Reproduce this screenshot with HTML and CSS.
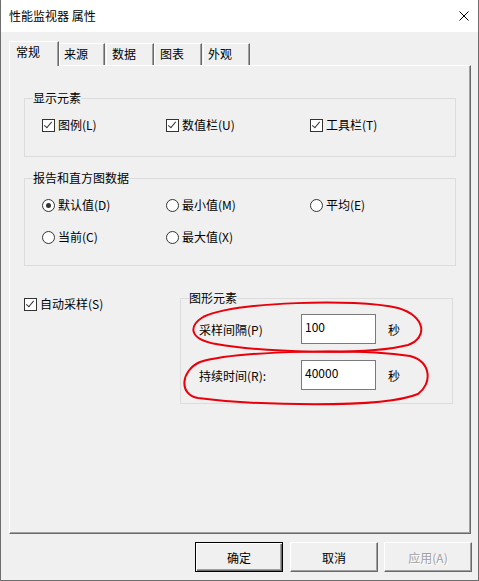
FILE: index.html
```html
<!DOCTYPE html>
<html>
<head>
    <meta charset="UTF-8">
    <title>性能监视器 属性</title>
    <link rel="stylesheet" href="styles.css">
</head>
<body>
<div class="window">
    <!-- Title bar -->
    <div class="titlebar">
        <span class="title">性能监视器 属性</span>
        <svg class="close" width="10" height="10" viewBox="0 0 10 10">
            <path d="M0.5 0.5 L9.5 9.5 M9.5 0.5 L0.5 9.5" stroke="#000" stroke-width="1" fill="none"/>
        </svg>
    </div>

    <div class="content">
        <!-- Tabs -->
        <div class="tabs">
            <div class="tab active">常规</div>
            <div class="tab tab-src">来源</div>
            <div class="tab tab-data">数据</div>
            <div class="tab tab-chart">图表</div>
            <div class="tab tab-look">外观</div>
        </div>

        <div class="panel">
            <!-- 显示元素 -->
            <div class="group group-show">
                <span class="group-title">显示元素</span>
                <div class="grid">
                    <label class="opt"><span class="box checked"></span>图例(L)</label>
                    <label class="opt"><span class="box checked"></span>数值栏(U)</label>
                    <label class="opt"><span class="box checked"></span>工具栏(T)</label>
                </div>
            </div>

            <!-- 报告和直方图数据 -->
            <div class="group group-report">
                <span class="group-title">报告和直方图数据</span>
                <div class="grid">
                    <label class="opt"><span class="radio on"></span>默认值(D)</label>
                    <label class="opt"><span class="radio"></span>最小值(M)</label>
                    <label class="opt"><span class="radio"></span>平均(E)</label>
                    <label class="opt"><span class="radio"></span>当前(C)</label>
                    <label class="opt"><span class="radio"></span>最大值(X)</label>
                </div>
            </div>

            <div class="bottom-row">
                <label class="opt auto"><span class="box checked"></span>自动采样(S)</label>

                <!-- 图形元素 -->
                <div class="group group-graph">
                    <span class="group-title">图形元素</span>
                    <div class="field">
                        <span class="field-label">采样间隔(P)</span>
                        <div class="input">100</div>
                        <span class="unit">秒</span>
                    </div>
                    <div class="field">
                        <span class="field-label">持续时间(R):</span>
                        <div class="input">40000</div>
                        <span class="unit">秒</span>
                    </div>
                </div>
            </div>
        </div>

        <!-- Dialog buttons -->
        <div class="buttons">
            <button class="btn default">确定</button>
            <button class="btn">取消</button>
            <button class="btn" disabled>应用(A)</button>
        </div>
    </div>

    <!-- Hand-drawn red marks -->
    <svg class="marks" width="479" height="581" viewBox="0 0 479 581">
        <path d="M203 317 C 235 302 355 298 398 308 C 426 316 428 338 408 345 C 365 356 262 352 216 344 C 188 339 189 326 203 317"
              stroke="#e8000b" stroke-width="2" fill="none"/>
        <path d="M200 362 C 240 350 362 349 410 356 C 432 362 432 384 418 394 C 382 409 252 405 198 398 C 179 395 180 371 200 362"
              stroke="#e8000b" stroke-width="2" fill="none"/>
    </svg>
</div>
</body>
</html>
```

FILE: styles.css
```css
body {
    margin: 0;
    font-family: "Noto Sans CJK SC", "Noto Sans", sans-serif;
    font-size: 12px;
    color: #000;
    background-color: #f0f0f0;
}
.window {
    position: relative;
    width: 479px;
    height: 581px;
    box-sizing: border-box;
    border: 1px solid #6e6e6e;
    border-top: none;
    background-color: #f0f0f0;
}
.titlebar {
    height: 31px;
    background-color: #fff;
    display: flex;
    align-items: center;
    justify-content: space-between;
    padding: 0 9px 1px 8px;
}
.title {
    line-height: 16px;
}
.close {
    margin-right: 0;
}
.content {
    padding: 0 8px;
}

/* tabs */
.tabs {
    display: flex;
    align-items: flex-end;
    height: 24px;
    margin-top: 9px;
}
.tab {
    box-sizing: border-box;
    height: 22px;
    line-height: 20px;
    padding-left: 4px;
    border-top: 1px solid #fff;
    border-left: 1px solid #fff;
    border-right: 1px solid #696969;
    box-shadow: inset -1px 0 #a0a0a0;
    background-color: #f0f0f0;
}
.tab.active {
    width: 50px;
    height: 25px;
    padding-left: 6px;
    margin-bottom: -1px;
    position: relative;
    z-index: 1;
}
.tab-src { width: 46px; margin-right: 1px; }
.tab-data { width: 48px; padding-left: 5px; }
.tab-chart { width: 48px; padding-left: 5px; margin-right: 1px; }
.tab-look { width: 47px; }

/* panel */
.panel {
    box-sizing: border-box;
    width: 462px;
    height: 469px;
    border-top: 1px solid #fff;
    border-left: 1px solid #fff;
    border-right: 1px solid #696969;
    border-bottom: 1px solid #696969;
    box-shadow: inset -1px -1px #a0a0a0;
    padding: 32px 0 0 14px;
}
.group {
    position: relative;
    box-sizing: border-box;
    border: 1px solid #dcdcdc;
}
.group-title {
    position: absolute;
    top: -9px;
    left: 8px;
    line-height: 16px;
    background-color: #f0f0f0;
}
.group-show {
    width: 432px;
    height: 59px;
    padding: 18px 0 0 17px;
}
.group-report {
    width: 432px;
    height: 88px;
    margin-top: 21px;
    padding: 18px 0 0 17px;
}
.grid {
    display: grid;
    grid-template-columns: 124px 144px auto;
    row-gap: 16px;
}
.opt {
    display: flex;
    align-items: center;
    height: 16px;
    line-height: 16px;
}
.box {
    width: 13px;
    height: 13px;
    box-sizing: border-box;
    border: 1px solid #333;
    background-color: #fff;
    margin-right: 3px;
    position: relative;
}
.box.checked::after {
    content: "";
    position: absolute;
    left: 3px;
    top: 0px;
    width: 3px;
    height: 7px;
    border-right: 1px solid #333;
    border-bottom: 1px solid #333;
    transform: rotate(40deg);
}
.radio {
    width: 13px;
    height: 13px;
    box-sizing: border-box;
    border: 1px solid #333;
    border-radius: 50%;
    background-color: #fff;
    margin-right: 3px;
    position: relative;
}
.radio.on::after {
    content: "";
    position: absolute;
    left: 3px;
    top: 3px;
    width: 5px;
    height: 5px;
    border-radius: 50%;
    background-color: #333;
}

/* bottom part */
.bottom-row {
    display: flex;
    align-items: flex-start;
    margin-top: 32px;
}
.auto {
    width: 156px;
    margin-top: -2px;
}
.group-graph {
    width: 273px;
    height: 106px;
    padding: 15px 0 0 18px;
}
.field {
    display: flex;
    align-items: center;
    height: 30px;
    margin-bottom: 16px;
}
.field-label {
    width: 102px;
}
.input {
    box-sizing: border-box;
    width: 75px;
    height: 30px;
    border: 1px solid #7a7a7a;
    background-color: #fff;
    padding: 4px 0 0 3px;
    line-height: 16px;
}
.unit {
    margin-left: 12px;
}

/* buttons */
.buttons {
    display: flex;
    justify-content: flex-end;
    width: 463px;
    margin-top: 8px;
    gap: 6px;
}
.btn {
    box-sizing: border-box;
    width: 88px;
    height: 30px;
    font-family: "Noto Sans CJK SC", "Noto Sans", sans-serif;
    font-size: 12px;
    color: #000;
    background-color: #f0f0f0;
    border: 1px solid;
    border-color: #fff #696969 #696969 #fff;
    box-shadow: inset -1px -1px #a0a0a0;
    padding: 0;
}
.btn.default {
    margin-right: 1px;
    border: 1px solid #000;
    box-shadow: inset 1px 1px #fff, inset -1px -1px #696969, inset -2px -2px #a0a0a0;
}
.btn:disabled {
    color: #a0a0a0;
    text-shadow: 1px 1px #fff;
}
.marks {
    position: absolute;
    left: -1px;
    top: 0;
    pointer-events: none;
}
```
